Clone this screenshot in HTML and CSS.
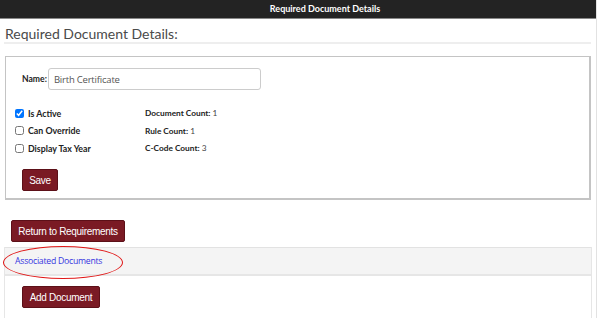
FILE: index.html
```html
<!DOCTYPE html>
<html>
<head>
<meta charset="utf-8">
<link rel="stylesheet" href="styles.css">
</head>
<body>
<div class="frame">
  <div class="topbar">Required Document Details</div>
  <div class="content">
    <h1 class="title">Required Document Details:</h1>
    <div class="panel">
      <div class="name-row">
        <label class="name-label">Name:</label>
        <input class="name-input" type="text" value="Birth Certificate">
      </div>
      <div class="grid">
        <div class="col">
          <label class="check"><input type="checkbox" checked><span>Is Active</span></label>
          <label class="check"><input type="checkbox"><span>Can Override</span></label>
          <label class="check"><input type="checkbox"><span>Display Tax Year</span></label>
        </div>
        <div class="col">
          <div class="count"><b>Document Count:</b> 1</div>
          <div class="count"><b>Rule Count:</b> 1</div>
          <div class="count"><b>C-Code Count:</b> 3</div>
        </div>
      </div>
      <button class="btn btn-save">Save</button>
    </div>
    <button class="btn btn-return">Return to Requirements</button>
    <div class="assoc">
      <div class="assoc-head">
        <a class="assoc-link" href="#">Associated Documents</a>
        <span class="ring"></span>
      </div>
      <div class="assoc-body">
        <button class="btn btn-add">Add Document</button>
      </div>
    </div>
  </div>
</div>
</body>
</html>
```

FILE: styles.css
```css
html, body {
  margin: 0;
  padding: 0;
  background: #fff;
}
body {
  font-family: Lato, "Open Sans", sans-serif;
  color: #222;
}
.frame {
  width: 596px;
  height: 318px;
  border-right: 1px solid #e2e2e2;
  overflow: hidden;
}
.topbar {
  height: 18px;
  background: #232323;
  border-bottom: 1px solid #888;
  color: #fff;
  font-family: Lato, sans-serif;
  font-weight: 700;
  font-size: 9px;
  line-height: 17px;
  text-align: center;
  padding-left: 54px;
}
.content {
  padding: 0 4px;
}
.title {
  margin: 7px 1px 0 0;
  padding: 0 0 0 1px;
  font-weight: 400;
  font-size: 14px;
  line-height: 16px;
  color: #4a4a4a;
  font-family: Lato, sans-serif;
  border-bottom: 2px solid #eeeeee;
}
.panel {
  margin: 12px 1px 0 1px;
  border: 1px solid #c4c4c4;
  border-right-width: 2px;
  border-bottom-width: 2px;
  height: 144px;
  padding: 11px 0 0 16px;
  box-sizing: border-box;
}
.name-row {
  display: flex;
  align-items: center;
}
.name-label {
  font-family: Lato, sans-serif;
  font-weight: 700;
  font-size: 8.6px;
  color: #222;
  margin-right: 1px;
}
.name-input {
  width: 213px;
  height: 22px;
  box-sizing: border-box;
  border: 1px solid #ccc;
  border-radius: 3px;
  padding: 0 5px;
  font-family: "Open Sans", sans-serif;
  font-size: 9.5px;
  color: #555;
  letter-spacing: -0.2px;
  margin: 0;
}
.grid {
  display: flex;
  margin-top: 17px;
  margin-left: -7px;
}
.col {
  display: flex;
  flex-direction: column;
  gap: 5.5px;
}
.col + .col {
  margin-left: 38px;
}
.check {
  display: flex;
  align-items: center;
  height: 12px;
  width: 92px;
  font-family: Lato, sans-serif;
  font-weight: 700;
  font-size: 8.8px;
  color: #222;
}
.check input {
  margin: 0 4px 0 0;
  width: 9px;
  height: 9px;
}
.count {
  height: 12px;
  display: flex;
  align-items: center;
  font-family: Lato, sans-serif;
  font-size: 8.3px;
  color: #444;
  white-space: pre;
}
.count b {
  font-weight: 700;
  color: #222;
}
.btn {
  display: block;
  background: #7a1a24;
  color: #fff;
  border: 1px solid #5c1018;
  border-radius: 2px;
  font-family: "Liberation Sans", Arial, sans-serif;
  font-size: 10px;
  height: 22px;
  padding: 0;
  letter-spacing: -0.3px;
  cursor: pointer;
}
.btn-save {
  margin-top: 15px;
  width: 36px;
}
.btn-return {
  margin: 20px 0 0 7px;
  width: 114px;
}
.btn-add {
  margin: 0;
  width: 78px;
}
.assoc {
  margin-top: 5px;
  border-left: 1px solid #e6e6e6;
  border-right: 1px solid #e6e6e6;
}
.assoc-head {
  position: relative;
  height: 26px;
  background: #f4f4f4;
  border-top: 1px solid #e2e2e2;
  border-bottom: 2px solid #e6e6e6;
  display: flex;
  align-items: center;
  padding-left: 10px;
}
.assoc-link {
  color: #3535e0;
  text-decoration: none;
  font-family: "Open Sans", sans-serif;
  font-size: 8.7px;
  letter-spacing: -0.25px;
}
.ring {
  position: absolute;
  left: -2px;
  top: -2px;
  width: 118px;
  height: 31px;
  border: 1.5px solid #e01818;
  border-radius: 50%;
}
.assoc-body {
  padding: 10px 0 20px 17px;
}
```
